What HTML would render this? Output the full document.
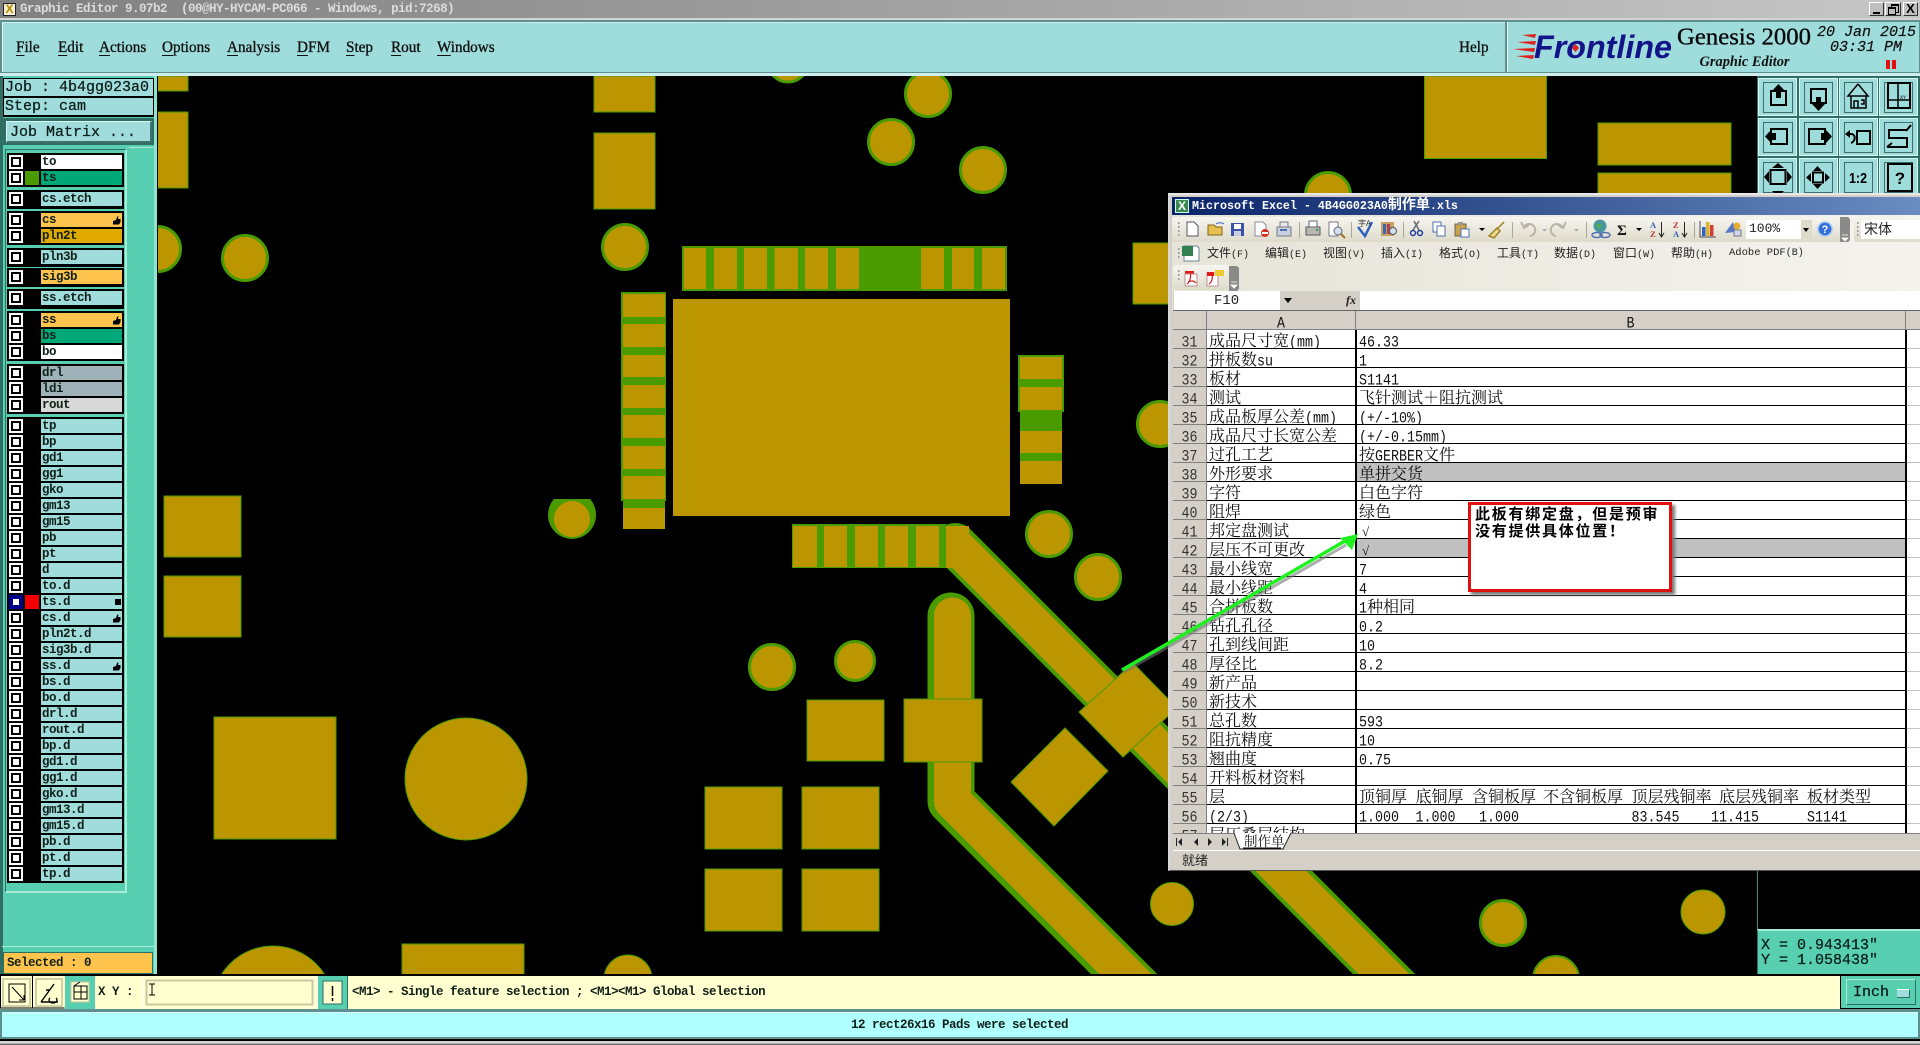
<!DOCTYPE html>
<html lang="zh"><head><meta charset="utf-8"><title>Graphic Editor</title>
<style>
html,body{margin:0;padding:0;background:#000}
body{position:relative;width:1920px;height:1045px;overflow:hidden;font-family:"Liberation Mono","Noto Serif CJK SC",monospace}
div,svg{position:absolute}
svg{left:0;top:0}
.m{position:absolute;top:37.5px;font:16px/20px "Liberation Serif",serif;-webkit-text-stroke:.35px #111;color:#111;white-space:nowrap;transform:scaleX(.95);transform-origin:left}
.m u{text-decoration-thickness:1px;text-underline-offset:3px}
.mono{font:bold 12.5px/14px "Liberation Mono",monospace;letter-spacing:-.5px;color:#102018;white-space:pre}
.big{font:15px/18px "Liberation Mono",monospace;-webkit-text-stroke:.25px #0c1c18;color:#0c1c18;white-space:pre}
.grp{left:7px;width:117px;background:#000}
.r{left:9px;width:113px;height:14px}
.c{left:0;top:0;width:10px;height:10px;border:2px solid #fff;background:#000}
.c:after{content:"";position:absolute;left:2px;top:2px;width:6px;height:6px;background:#fff}
.n{left:32px;top:0;width:81px;height:14px;background:#a0dcdc;text-indent:1px;font:bold 12.5px/15px "Liberation Mono",monospace;letter-spacing:-.5px;color:#102018;white-space:pre}
.sheet{left:1173px;top:311px;width:747px;height:522px;overflow:hidden;background:#fff;font:16px/19px "Noto Serif CJK SC",serif;color:#111}
.sheet>div{left:0;width:747px;height:19px}
.h,.a,.b{position:absolute;top:0;height:18px;white-space:nowrap;overflow:hidden}
.h{left:0;width:33px;background:#d4d0c8;border-right:1px solid #808080;border-bottom:1px solid #808080;text-align:center;color:#333}
.a{left:34px;width:147px;padding-left:2px;border-bottom:1px solid #000}
.b{left:184px;width:546px;padding-left:2px;border-bottom:1px solid #000}
.b span{position:absolute;top:0}
.sheet em{font:13.33px/19px "Liberation Mono",monospace;display:inline-block;transform:scaleY(1.18);font-style:normal}
.sheet i{font:italic 13px/19px "Liberation Serif",serif;display:inline-block;margin-left:3px}
.mi{position:absolute;top:245px;font:12px/16px "Noto Sans CJK SC",sans-serif;color:#222;white-space:nowrap}
.mi em{font:10px/16px "Liberation Mono",monospace;font-style:normal}
</style></head><body>

<!-- canvas -->
<svg width="1920" height="1045" viewBox="0 0 1920 1045">
<defs><clipPath id="cv"><rect x="157" y="76" width="1601" height="898"/></clipPath></defs>
<rect width="1920" height="1045" fill="#000"/>
<g clip-path="url(#cv)">
<g fill="#bb9600" stroke="#4a9b00" stroke-width="1">
<rect x="157" y="76" width="31" height="15"/><rect x="157" y="112" width="31" height="76"/>
<rect x="594" y="76" width="61" height="36"/><rect x="594" y="133" width="61" height="76"/>
<rect x="1424.5" y="76" width="122" height="82.5"/>
<rect x="1598" y="123" width="133" height="42"/><rect x="1598" y="173" width="133" height="60"/>
<rect x="1133" y="243" width="50" height="61"/>
<rect x="164" y="496" width="77" height="61"/><rect x="164" y="576" width="77" height="61"/>
<rect x="214" y="717" width="122" height="122"/>
<rect x="402" y="944" width="122" height="40"/>
<rect x="807" y="700" width="77" height="61"/>
<rect x="705" y="787" width="77" height="62"/><rect x="802" y="787" width="77" height="62"/>
<rect x="705" y="869" width="77" height="62"/><rect x="802" y="869" width="77" height="62"/>
<polygon points="1065,728 1108,771 1054,826 1011,782"/>
</g>
<g fill="#bb9600" stroke="#4a9b00" stroke-width="3">
<circle cx="158" cy="249" r="22.5"/><circle cx="245" cy="258" r="22.5"/><circle cx="625" cy="247" r="22.5"/>
<circle cx="788" cy="62" r="20"/><circle cx="928" cy="94" r="22.5"/><circle cx="891" cy="142" r="22.5"/>
<circle cx="983" cy="170" r="22.5"/><circle cx="1328" cy="195" r="22.5"/><circle cx="1049" cy="534" r="22.5"/>
<circle cx="1098" cy="577" r="22.5"/><circle cx="772" cy="667" r="22.5"/><circle cx="855" cy="661" r="19.5"/>
<circle cx="1160" cy="424" r="22.5"/><circle cx="1503" cy="923" r="22.5"/>
</g>
<path d="M554 499A24 24 0 1 0 590 499Z" fill="#4a9b00"/><circle cx="572" cy="519" r="18" fill="#bb9600"/>
<g fill="#bb9600" stroke="#4a9b00" stroke-width="1">
<circle cx="466" cy="779" r="61"/><circle cx="273" cy="1007" r="61"/><circle cx="1172" cy="904" r="21.5"/>
<circle cx="1703" cy="912" r="22"/></g>
<circle cx="628" cy="979" r="24" fill="#bb9600" stroke="#4a9b00"/>
<circle cx="1556" cy="979" r="23" fill="#bb9600" stroke="#4a9b00" stroke-width="2"/>
<!-- top strip -->
<rect x="682" y="246" width="325" height="45" fill="#4a9b00"/>
<g fill="#bb9600"><rect x="684" y="248" width="22" height="41"/><rect x="714" y="248" width="23" height="41"/><rect x="744" y="248" width="23" height="41"/><rect x="774.5" y="248" width="23.5" height="41"/><rect x="805" y="248" width="23" height="41"/><rect x="836" y="248" width="23" height="41"/><rect x="921" y="248" width="23" height="41"/><rect x="952" y="248" width="22" height="41"/><rect x="982" y="248" width="23" height="41"/>
<rect x="673" y="299" width="337" height="217"/></g>
<!-- left strip -->
<rect x="621" y="292" width="45" height="209" fill="#4a9b00"/><rect x="623" y="501" width="42" height="7" fill="#4a9b00"/>
<g fill="#bb9600"><rect x="623" y="294" width="42" height="23"/><rect x="623" y="324" width="42" height="23"/><rect x="623" y="355" width="42" height="22"/><rect x="623" y="385" width="42" height="23"/><rect x="623" y="415" width="42" height="23"/><rect x="623" y="446" width="42" height="23"/><rect x="623" y="476" width="42" height="23"/><rect x="623" y="508" width="42" height="21"/></g>
<!-- right strip -->
<rect x="1018" y="355" width="46" height="57" fill="#4a9b00"/><rect x="1020" y="412" width="42" height="19" fill="#4a9b00"/><rect x="1020" y="453" width="42" height="8" fill="#4a9b00"/>
<g fill="#bb9600"><rect x="1020" y="357" width="42" height="22"/><rect x="1020" y="387" width="42" height="23"/><rect x="1020" y="431" width="42" height="22"/><rect x="1020" y="461" width="42" height="23"/></g>
<!-- traces -->
<path d="M955 545L1440 1030" fill="none" stroke="#4a9b00" stroke-width="44" stroke-linecap="round"/>
<path d="M955 545L1440 1030" fill="none" stroke="#bb9600" stroke-width="36" stroke-linecap="round"/>
<path d="M951 616V801L1160 1010" fill="none" stroke="#4a9b00" stroke-width="47" stroke-linecap="round" stroke-linejoin="round"/>
<path d="M952.5 616V801L1160 1008.5" fill="none" stroke="#bb9600" stroke-width="37" stroke-linecap="round" stroke-linejoin="round"/>
<rect x="904" y="699" width="78" height="63" fill="#bb9600" stroke="#4a9b00"/>
<polygon points="1133,663 1079,712 1123,757 1177,708" fill="#bb9600" stroke="#4a9b00"/>
<!-- bottom strip -->
<rect x="792" y="524" width="154" height="44" fill="#4a9b00"/>
<rect x="946" y="526" width="23" height="42" fill="#bb9600"/>
<g fill="#bb9600"><rect x="793" y="526" width="24" height="41"/><rect x="824" y="526" width="23" height="41"/><rect x="855" y="526" width="23" height="41"/><rect x="885" y="526" width="23" height="41"/><rect x="916" y="526" width="23" height="41"/></g>
</g>
<rect x="1757" y="870" width="1" height="59" fill="#3f8a7c"/>
</svg>

<!-- title bar -->
<div style="left:0;top:0;width:1920px;height:18px;background:linear-gradient(90deg,#808080,#c6c6c6)"></div>
<div style="left:0;top:18px;width:1920px;height:2px;background:#d4d4d4"></div>
<div style="left:3px;top:3px;width:13px;height:13px;background:#f4eecb;border:1px solid #223;box-sizing:border-box;font:bold 12px/11px 'Liberation Sans',sans-serif;color:#b08a00;text-align:center">X</div>
<div class="mono" style="left:20px;top:2px;color:#dcdcdc">Graphic Editor 9.07b2  (00@HY-HYCAM-PC066 - Windows, pid:7268)</div>
<div style="left:1869px;top:2px;width:15px;height:14px;background:#bfbfbf;border:1px solid;border-color:#fff #333 #333 #fff;box-sizing:border-box"><div style="left:3px;top:9px;width:7px;height:2px;background:#000"></div></div>
<div style="left:1885px;top:2px;width:16px;height:14px;background:#bfbfbf;border:1px solid;border-color:#fff #333 #333 #fff;box-sizing:border-box"><div style="left:5px;top:1px;width:6px;height:6px;border:1px solid #000;border-top-width:2px"></div><div style="left:2px;top:4px;width:6px;height:5px;border:1px solid #000;border-top-width:2px;background:#bfbfbf"></div></div>
<div style="left:1903px;top:2px;width:15px;height:14px;background:#bfbfbf;border:1px solid;border-color:#fff #333 #333 #fff;box-sizing:border-box;font:bold 13px/12px 'Liberation Sans',sans-serif;text-align:center;color:#000">X</div>

<!-- menu bar -->
<div style="left:0;top:20px;width:1920px;height:56px;background:#5f8f8f"></div>
<div style="left:0;top:73px;width:1920px;height:3px;background:#cfeeee"></div>
<div style="left:2px;top:22px;width:1502px;height:49px;background:#9fdcdc;border-left:1px solid #e8ffff;border-top:1px solid #c8f0f0"></div>
<div class="m" style="left:15.5px"><u>F</u>ile</div>
<div class="m" style="left:57.5px"><u>E</u>dit</div>
<div class="m" style="left:99px"><u>A</u>ctions</div>
<div class="m" style="left:162.4px"><u>O</u>ptions</div>
<div class="m" style="left:227px"><u>A</u>nalysis</div>
<div class="m" style="left:296.7px"><u>D</u>FM</div>
<div class="m" style="left:346px"><u>S</u>tep</div>
<div class="m" style="left:391.4px"><u>R</u>out</div>
<div class="m" style="left:437px"><u>W</u>indows</div>
<div class="m" style="left:1459px">Help</div>
<div style="left:1507px;top:22px;width:411px;height:50px;background:#9fdcdc;border-left:1px solid #e8ffff"></div>
<svg width="1920" height="80" viewBox="0 0 1920 80" style="height:80px">
<g fill="#e02020"><polygon points="1522,35 1536,34 1535,38"/><polygon points="1517,42 1536,41 1535,45"/><polygon points="1513,49 1535,48 1534,52"/><polygon points="1516,56 1534,55 1533,59"/></g>
<text x="1534" y="58" font-family="Liberation Sans" font-weight="bold" font-style="italic" font-size="32" fill="#14148a" textLength="138" lengthAdjust="spacingAndGlyphs">Frontline</text>
<polygon points="1575.5,44 1579,48 1575.5,52 1572,48" fill="#e02020"/>
<text x="1677" y="44.5" font-family="Liberation Serif" font-size="24.5" fill="#0a0a0a" stroke="#0a0a0a" stroke-width=".35" textLength="134" lengthAdjust="spacingAndGlyphs">Genesis 2000</text>
<text x="1699.5" y="66" font-family="Liberation Serif" font-style="italic" font-weight="bold" font-size="14.5" fill="#111" textLength="90" lengthAdjust="spacingAndGlyphs">Graphic Editor</text>
<text x="1817" y="36" font-family="Liberation Mono" font-style="italic" font-size="15" fill="#111" stroke="#111" stroke-width=".2">20 Jan 2015</text>
<text x="1830" y="51" font-family="Liberation Mono" font-style="italic" font-size="15" fill="#111" stroke="#111" stroke-width=".2">03:31 PM</text>
<rect x="1886" y="60" width="4" height="9" fill="#e01010"/><rect x="1892" y="60" width="4" height="9" fill="#e01010"/>
</svg>

<!-- left panel -->
<div style="left:0;top:76px;width:155px;height:900px;background:#58cfb0"></div>
<div style="left:0;top:76px;width:3px;height:900px;background:#2f6e62"></div>
<div style="left:154px;top:76px;width:3px;height:900px;background:#8fe4cf;border-right:1px solid #000"></div>
<div style="left:3px;top:78px;width:151px;height:39px;background:#000"></div>
<div class="big" style="left:4px;top:79px;width:149px;height:17px;background:#a0dcdc;line-height:18px;text-indent:1px">Job : 4b4gg023a0</div>
<div class="big" style="left:4px;top:98px;width:149px;height:17px;background:#a0dcdc;line-height:18px;text-indent:1px">Step: cam</div>
<div style="left:3px;top:118px;width:151px;height:27px;background:#2f6e62"></div>
<div class="big" style="left:6px;top:121px;width:143px;height:19px;background:#a0dcdc;border:1px solid #d8f8f8;border-right:2px solid #3f6f6f;border-bottom:2px solid #3f6f6f;line-height:21px;text-indent:3px">Job Matrix ...</div>
<div style="left:5px;top:149px;width:122px;height:744px;background:#58cfb0;border:1px solid #2f6e62;border-right:2px solid #a8ecd8;border-bottom:2px solid #a8ecd8;box-sizing:border-box"></div>
<div style="left:129px;top:147px;width:25px;height:1px;background:#a8ecd8"></div>

<div class="grp" style="top:153px;height:34px"></div><div class="grp" style="top:190px;height:19px"></div><div class="grp" style="top:211px;height:34px"></div><div class="grp" style="top:248px;height:19px"></div><div class="grp" style="top:268px;height:19px"></div><div class="grp" style="top:289px;height:20px"></div><div class="grp" style="top:311px;height:50px"></div><div class="grp" style="top:364px;height:50px"></div><div class="grp" style="top:417px;height:466px"></div>

<div class="r" style="top:155px"><div class="c"></div><div class="n" style="background:#fff">to</div></div>
<div class="r" style="top:171px"><div class="c"></div><div style="left:16px;top:0;width:14px;height:14px;background:#4a9b00"></div><div class="n" style="background:#00a878">ts</div></div>
<div class="r" style="top:192px"><div class="c"></div><div class="n">cs.etch</div></div>
<div class="r" style="top:213px"><div class="c"></div><div class="n" style="background:#ffc44d">cs<svg width="9" height="9" viewBox="0 0 9 9" style="left:71px;top:3px"><path d="M1 8.5V5L4 4 5 1 6.5 0 6 3H8.5V6L7 8.5Z"/></svg></div></div>
<div class="r" style="top:229px"><div class="c"></div><div class="n" style="background:#e0aa00">pln2t</div></div>
<div class="r" style="top:250px"><div class="c"></div><div class="n">pln3b</div></div>
<div class="r" style="top:270px"><div class="c"></div><div class="n" style="background:#ffc44d">sig3b</div></div>
<div class="r" style="top:291px"><div class="c"></div><div class="n">ss.etch</div></div>
<div class="r" style="top:313px"><div class="c"></div><div class="n" style="background:#ffc44d">ss<svg width="9" height="9" viewBox="0 0 9 9" style="left:71px;top:3px"><path d="M1 8.5V5L4 4 5 1 6.5 0 6 3H8.5V6L7 8.5Z"/></svg></div></div>
<div class="r" style="top:329px"><div class="c"></div><div class="n" style="background:#00a878">bs</div></div>
<div class="r" style="top:345px"><div class="c"></div><div class="n" style="background:#fff">bo</div></div>
<div class="r" style="top:366px"><div class="c"></div><div class="n" style="background:#9fb2ba">drl</div></div>
<div class="r" style="top:382px"><div class="c"></div><div class="n" style="background:#9fb2ba">ldi</div></div>
<div class="r" style="top:398px"><div class="c"></div><div class="n" style="background:#d8d8d8">rout</div></div>
<div class="r" style="top:419px"><div class="c"></div><div class="n">tp</div></div>
<div class="r" style="top:435px"><div class="c"></div><div class="n">bp</div></div>
<div class="r" style="top:451px"><div class="c"></div><div class="n">gd1</div></div>
<div class="r" style="top:467px"><div class="c"></div><div class="n">gg1</div></div>
<div class="r" style="top:483px"><div class="c"></div><div class="n">gko</div></div>
<div class="r" style="top:499px"><div class="c"></div><div class="n">gm13</div></div>
<div class="r" style="top:515px"><div class="c"></div><div class="n">gm15</div></div>
<div class="r" style="top:531px"><div class="c"></div><div class="n">pb</div></div>
<div class="r" style="top:547px"><div class="c"></div><div class="n">pt</div></div>
<div class="r" style="top:563px"><div class="c"></div><div class="n">d</div></div>
<div class="r" style="top:579px"><div class="c"></div><div class="n">to.d</div></div>
<div class="r" style="top:595px"><div class="c" style="border-color:#00008c;background:#00008c"></div><div style="left:16px;top:0;width:14px;height:14px;background:#f00000"></div><div class="n">ts.d<div style="left:74px;top:4px;width:4px;height:4px;border:1px solid #000;background:#000"></div></div></div>
<div class="r" style="top:611px"><div class="c"></div><div class="n">cs.d<svg width="9" height="9" viewBox="0 0 9 9" style="left:71px;top:3px"><path d="M1 8.5V5L4 4 5 1 6.5 0 6 3H8.5V6L7 8.5Z"/></svg></div></div>
<div class="r" style="top:627px"><div class="c"></div><div class="n">pln2t.d</div></div>
<div class="r" style="top:643px"><div class="c"></div><div class="n">sig3b.d</div></div>
<div class="r" style="top:659px"><div class="c"></div><div class="n">ss.d<svg width="9" height="9" viewBox="0 0 9 9" style="left:71px;top:3px"><path d="M1 8.5V5L4 4 5 1 6.5 0 6 3H8.5V6L7 8.5Z"/></svg></div></div>
<div class="r" style="top:675px"><div class="c"></div><div class="n">bs.d</div></div>
<div class="r" style="top:691px"><div class="c"></div><div class="n">bo.d</div></div>
<div class="r" style="top:707px"><div class="c"></div><div class="n">drl.d</div></div>
<div class="r" style="top:723px"><div class="c"></div><div class="n">rout.d</div></div>
<div class="r" style="top:739px"><div class="c"></div><div class="n">bp.d</div></div>
<div class="r" style="top:755px"><div class="c"></div><div class="n">gd1.d</div></div>
<div class="r" style="top:771px"><div class="c"></div><div class="n">gg1.d</div></div>
<div class="r" style="top:787px"><div class="c"></div><div class="n">gko.d</div></div>
<div class="r" style="top:803px"><div class="c"></div><div class="n">gm13.d</div></div>
<div class="r" style="top:819px"><div class="c"></div><div class="n">gm15.d</div></div>
<div class="r" style="top:835px"><div class="c"></div><div class="n">pb.d</div></div>
<div class="r" style="top:851px"><div class="c"></div><div class="n">pt.d</div></div>
<div class="r" style="top:867px"><div class="c"></div><div class="n">tp.d</div></div>

<div style="left:2px;top:946px;width:152px;height:1px;background:#a8ecd8"></div>
<div style="left:3px;top:952px;width:150px;height:22px;background:#2f6e62"></div>
<div class="mono" style="left:4px;top:953px;width:148px;height:20px;background:#ffc44d;line-height:20px;text-indent:3px">Selected : 0</div>

<!-- right toolbar -->
<div style="left:1757px;top:76px;width:163px;height:125px;background:#2f6e62"></div>
<svg width="1920" height="200" viewBox="0 0 1920 200" style="height:200px">
<g fill="#9fdcdc" stroke="#d8f8f8">
<rect x="1758.5" y="78.5" width="38" height="37"/><rect x="1799.5" y="78.5" width="38" height="37"/><rect x="1839.5" y="78.5" width="38" height="37"/><rect x="1879.5" y="78.5" width="38" height="37"/>
<rect x="1758.5" y="118.5" width="38" height="37"/><rect x="1799.5" y="118.5" width="38" height="37"/><rect x="1839.5" y="118.5" width="38" height="37"/><rect x="1879.5" y="118.5" width="38" height="37"/>
<rect x="1758.5" y="158.5" width="38" height="37"/><rect x="1799.5" y="158.5" width="38" height="37"/><rect x="1839.5" y="158.5" width="38" height="37"/><rect x="1879.5" y="158.5" width="38" height="37"/>
</g>
<g fill="none" stroke="#3c6e6e">
<rect x="1763.5" y="82.5" width="29" height="30"/><rect x="1804.5" y="82.5" width="28" height="30"/><rect x="1844.5" y="82.5" width="28" height="30"/><rect x="1884.5" y="82.5" width="28" height="30"/>
<rect x="1763.5" y="122.5" width="29" height="30"/><rect x="1804.5" y="122.5" width="28" height="30"/><rect x="1844.5" y="122.5" width="28" height="30"/><rect x="1884.5" y="122.5" width="28" height="30"/>
<rect x="1763.5" y="162.5" width="29" height="30"/><rect x="1804.5" y="162.5" width="28" height="30"/><rect x="1844.5" y="162.5" width="28" height="30"/><rect x="1884.5" y="162.5" width="28" height="30"/>
</g>
<g fill="none" stroke="#000" stroke-width="2">
<rect x="1771" y="91" width="15" height="14"/><rect x="1811" y="89" width="15" height="14"/>
<path d="M1858 84L1848 96H1868L1858 84M1851 96V108H1866V96M1854 108V101H1858V108M1861 100H1864V104H1861" stroke-width="1.5"/>
<rect x="1888" y="83" width="22" height="25" stroke-width="2"/><path d="M1888 100H1910M1898 83V108" stroke-width="1.5"/>
<rect x="1771" y="129" width="16" height="15"/><rect x="1809" y="129" width="16" height="15"/>
<rect x="1857" y="131" width="13" height="13"/>
<path d="M1851 143C1856 141 1856 134 1851 134H1847" stroke-width="2"/>
<path d="M1907 130H1889V138H1907V147H1887M1911 125L1906 131M1887 147L1892 143" stroke-width="2"/>
<rect x="1770.5" y="170" width="15" height="14"/>
<rect x="1813" y="172.5" width="10" height="10"/>
<rect x="1888" y="164" width="24" height="27"/>
</g>
<g fill="#000">
<polygon points="1778.5,84 1772,91 1776,91 1776,98 1781,98 1781,91 1785,91"/>
<polygon points="1818.5,111 1812,104 1816,104 1816,97 1821,97 1821,104 1825,104"/>
<polygon points="1765,136.5 1771,130 1771,133 1776,133 1776,140 1771,140 1771,143"/>
<polygon points="1832,136.5 1826,130 1826,133 1821,133 1821,140 1826,140 1826,143"/>
<polygon points="1845,134 1850,130 1850,138"/>
<polygon points="1778,163 1772,168 1784,168"/><polygon points="1764,177 1769,171 1769,183"/><polygon points="1792,177 1787,171 1787,183"/><polygon points="1778,197 1772,191 1784,191"/>
<polygon points="1817.5,166 1813,171 1822,171"/><polygon points="1817.5,189 1813,184 1822,184"/><polygon points="1806,177.5 1811,173 1811,182"/><polygon points="1830,177.5 1825,173 1825,182"/>
</g>
<text x="1858" y="183" text-anchor="middle" font-family="Liberation Sans" font-weight="bold" font-size="15" fill="#000" textLength="18" lengthAdjust="spacingAndGlyphs">1:2</text>
<text x="1900" y="184" text-anchor="middle" font-family="Liberation Sans" font-weight="bold" font-size="17" fill="#000">?</text>
<text x="1900" y="99" font-family="Liberation Mono" font-size="5" fill="#000">XY</text>
</svg>

<!-- coords panel -->
<div style="left:1757px;top:929px;width:163px;height:45px;background:#58cfb0;border-top:2px solid #a8ecd8;border-left:1px solid #2f6e62;box-sizing:border-box"></div>
<div class="big" style="left:1761px;top:938px;line-height:15px;color:#072018">X = 0.943413"
Y = 1.058438"</div>

<!-- bottom command bar -->
<div style="left:0;top:974px;width:1920px;height:2px;background:#000"></div>
<div style="left:0;top:976px;width:1840px;height:33px;background:#ffffd0;border-bottom:1px solid #000"></div>
<svg width="1920" height="1045" viewBox="0 0 1920 1045">
<g fill="#ffffd0" stroke="#cfcfa8" stroke-width="2"><rect x="3" y="979" width="27" height="27"/><rect x="36" y="979" width="26" height="27"/></g>
<path d="M0.5 976V1008H32.5M32.5 976V1008H64.5" fill="none" stroke="#000"/>
<g fill="none" stroke="#000"><rect x="9" y="984" width="16" height="18"/><path d="M12 987L24 1000M24 1000L24 995M24 1000L19 1000"/><path d="M41 1002H58M54 984L41 1002M46 990H50M50 998a4 3 0 1 0 6 0" stroke-width="1.4"/></g>
<rect x="65" y="976" width="30" height="33" fill="#58cfb0"/><rect x="71" y="982" width="18" height="20" fill="#ffffd0" stroke="#c8c8a0"/>
<path d="M74 986H87V999H74ZM74 992H87M81 986V999M74 986L80 982" fill="none" stroke="#000"/>
<rect x="143" y="976" width="173" height="32" fill="#ffffd0"/><rect x="146.5" y="980.5" width="166" height="24" fill="none" stroke="#c8c8a0" stroke-width="2"/>
<path d="M143 976V1008M316 976V1008" stroke="#fff"/>
<path d="M149 984H155M152 984V995M149 995H155" stroke="#000" fill="none"/>
<rect x="318" y="976" width="29" height="33" fill="#58cfb0"/><rect x="323" y="981" width="19" height="23" fill="#ffffd0" stroke="#2f6e62"/>
<path d="M332.5 986V996M332.5 998V1001" stroke="#000" stroke-width="1.5"/>
<rect x="347" y="976" width="1" height="33" fill="#2f6e62"/>
</svg>
<div class="mono" style="left:98px;top:985px">X Y :</div>
<div class="mono" style="left:352px;top:985px">&lt;M1&gt; - Single feature selection ; &lt;M1&gt;&lt;M1&gt; Global selection</div>
<div style="left:1840px;top:976px;width:80px;height:33px;background:#000"></div>
<div style="left:1841px;top:976px;width:79px;height:32px;background:#58cfb0"></div>
<div class="big" style="left:1846px;top:979px;width:70px;height:26px;background:#58cfb0;border:1px solid #a8ecd8;border-right-color:#2f6e62;border-bottom-color:#2f6e62;box-sizing:border-box;line-height:25px;text-indent:6px">Inch</div>
<div style="left:1897px;top:989px;width:12px;height:7px;background:#a0dcdc;border-bottom:1px solid #2f6e62;border-right:1px solid #2f6e62;border-top:1px solid #fff"></div>

<!-- status bar -->
<div style="left:0;top:1009px;width:1920px;height:36px;background:#5f9090"></div>
<div style="left:2px;top:1012px;width:1916px;height:27px;background:#b0ffff;border-top:1px solid #d8ffff;border-bottom:2px solid #5f9090;box-sizing:border-box"></div>
<div class="mono" style="left:851px;top:1018px">12 rect26x16 Pads were selected</div>
<div style="left:0;top:1039px;width:1920px;height:2px;background:#000"></div>
<div style="left:0;top:1041px;width:1920px;height:4px;background:linear-gradient(#d4d4d4,#d4d4d4 50%,#444)"></div>

<!-- excel window -->
<div style="left:1168px;top:193px;width:752px;height:678px;background:#d4d0c8;border-top:2px solid #e8e8e8;border-left:2px solid #d8d8d8;border-bottom:1px solid #555;box-sizing:border-box"></div>
<div style="left:1172px;top:197px;width:748px;height:18px;background:linear-gradient(90deg,#0a246a,#6a8cc0)"></div>
<div style="left:1175px;top:199px;width:14px;height:14px;background:#3c8a50;border:1px solid #cfe;box-sizing:border-box;font:bold 12px/12px 'Liberation Sans',sans-serif;color:#fff;text-align:center">X</div>
<div style="left:1192px;top:197px;font:bold 11.67px/18px 'Liberation Mono','Noto Sans CJK SC',monospace;color:#fff;white-space:pre">Microsoft Excel - 4B4GG023A0<span style="font-size:14px">制作单</span>.xls</div>
<div style="left:1172px;top:215px;width:748px;height:96px;background:linear-gradient(90deg,#e6e4d8,#f4f3ee)"></div>
<div style="left:1172px;top:217px;width:678px;height:25px;background:linear-gradient(#f6f5ef,#dedbca);border-radius:3px"></div>
<div style="left:1840px;top:217px;width:10px;height:25px;background:#8a8a88;border-radius:0 3px 3px 0"></div>
<div style="left:1854px;top:217px;width:66px;height:25px;background:linear-gradient(#f6f5ef,#dedbca);border-radius:3px 0 0 3px"></div>
<div style="left:1746px;top:220px;width:66px;height:19px;background:#fff;font:13px/17px 'Liberation Mono',monospace;text-indent:3px;color:#222">100%<div style="left:55px;top:0;width:11px;height:19px;background:#dedbca"><div style="left:2px;top:8px;border:3px solid transparent;border-top:4px solid #000"></div></div></div>
<div style="left:1861px;top:220px;width:59px;height:19px;background:#fff;font:14px/18px 'Noto Sans CJK SC',sans-serif;text-indent:3px;color:#222">宋体</div>
<div class="mi" style="left:1207px">文件<em>(F)</em></div>
<div class="mi" style="left:1265px">编辑<em>(E)</em></div>
<div class="mi" style="left:1323px">视图<em>(V)</em></div>
<div class="mi" style="left:1381px">插入<em>(I)</em></div>
<div class="mi" style="left:1439px">格式<em>(O)</em></div>
<div class="mi" style="left:1497px">工具<em>(T)</em></div>
<div class="mi" style="left:1554px">数据<em>(D)</em></div>
<div class="mi" style="left:1613px">窗口<em>(W)</em></div>
<div class="mi" style="left:1671px">帮助<em>(H)</em></div>
<div class="mi" style="left:1729px;font:10.5px/16px 'Liberation Mono',monospace">Adobe PDF<em>(B)</em></div>
<div style="left:1173px;top:265px;width:58px;height:25px;background:linear-gradient(#f6f5ef,#dedbca);border-radius:3px"></div>
<div style="left:1229px;top:266px;width:10px;height:25px;background:#8a8a88;border-radius:0 3px 3px 0"></div>

<svg width="1920" height="320" viewBox="0 0 1920 320" style="height:320px">
<g stroke="#aca899"><path d="M1299.5 222V238M1351.5 222V238M1403.5 222V238M1512.5 222V238M1586.5 222V238M1694.5 222V238"/></g>
<g fill="#999"><rect x="1178" y="222" width="1.5" height="2"/><rect x="1178" y="226" width="1.5" height="2"/><rect x="1178" y="230" width="1.5" height="2"/><rect x="1178" y="234" width="1.5" height="2"/><rect x="1178" y="248" width="1.5" height="2"/><rect x="1178" y="252" width="1.5" height="2"/><rect x="1178" y="256" width="1.5" height="2"/><rect x="1178" y="270" width="1.5" height="2"/><rect x="1178" y="274" width="1.5" height="2"/><rect x="1178" y="278" width="1.5" height="2"/><rect x="1857" y="222" width="1.5" height="2"/><rect x="1857" y="226" width="1.5" height="2"/><rect x="1857" y="230" width="1.5" height="2"/><rect x="1857" y="234" width="1.5" height="2"/></g>
<path d="M1187 222H1194L1198 226V236H1187Z" fill="#fff" stroke="#556"/>
<path d="M1208 225H1214L1216 227H1222V235H1208Z" fill="#e8c050" stroke="#806020"/><path d="M1216 224a5 3 0 0 1 8 0" fill="none" stroke="#3060c0"/>
<rect x="1231" y="223" width="13" height="13" fill="#3c52a8"/><rect x="1234" y="224" width="7" height="5" fill="#fff"/><rect x="1234" y="231" width="7" height="5" fill="#c8d0e0"/>
<path d="M1255 222H1263L1266 225V236H1255Z" fill="#fff" stroke="#889"/><circle cx="1265" cy="233" r="4" fill="#d83020"/><rect x="1262" y="232" width="6" height="2" fill="#fff"/>
<rect x="1277" y="227" width="14" height="9" fill="#c8d0e0" stroke="#778"/><path d="M1280 222H1288V227H1280Z" fill="#e8e8e8" stroke="#778"/><rect x="1280" y="229" width="7" height="2" fill="#5070b0"/>
<rect x="1306" y="227" width="14" height="8" fill="#b8b8b0" stroke="#556"/><rect x="1309" y="221" width="8" height="6" fill="#fff" stroke="#667"/><rect x="1316" y="229" width="2" height="2" fill="#20a040"/>
<path d="M1329 222H1338V236H1329Z" fill="#fff" stroke="#778"/><circle cx="1338" cy="231" r="4" fill="#cfe0f0" stroke="#667"/><path d="M1341 234L1345 238" stroke="#a07020" stroke-width="2"/>
<path d="M1358 227L1365 236 1372 222" fill="none" stroke="#3060c0" stroke-width="2.5"/><text x="1358" y="226" font-family="Noto Sans CJK SC" font-size="8" fill="#333">字A</text>
<rect x="1381" y="222" width="13" height="14" fill="#c8a060"/><rect x="1383" y="224" width="3" height="10" fill="#3868b0"/><rect x="1387" y="224" width="3" height="10" fill="#b04060"/><circle cx="1393" cy="231" r="3.5" fill="#cfe0f0" stroke="#555"/>
<path d="M1414 221L1419 230M1419 221L1413 230" stroke="#667" stroke-width="1.5"/><circle cx="1413" cy="233" r="2.5" fill="none" stroke="#2040a0" stroke-width="1.5"/><circle cx="1420" cy="233" r="2.5" fill="none" stroke="#2040a0" stroke-width="1.5"/>
<rect x="1433" y="222" width="8" height="10" fill="#fff" stroke="#5070b0"/><rect x="1437" y="226" width="8" height="10" fill="#fff" stroke="#5070b0"/>
<rect x="1455" y="224" width="11" height="12" fill="#c8a050" stroke="#665"/><rect x="1458" y="222" width="5" height="3" fill="#999"/><rect x="1461" y="229" width="8" height="8" fill="#fff" stroke="#5070b0"/>
<path d="M1479 228h6l-3 3Z" fill="#000"/>
<path d="M1489 236L1497 228 1500 231 1494 238ZM1498 228L1504 222" fill="#e8d890" stroke="#a08020" stroke-width="1.5"/>
<path d="M1530 236a6 6 0 1 0-6-9M1521 222L1524 228 1529 225" fill="none" stroke="#b8b4a8" stroke-width="2"/><path d="M1542 229h5l-2.5 2.5Z M1574 229h5l-2.5 2.5Z" fill="#aaa"/>
<path d="M1556 236a6 6 0 1 1 6-9M1566 222L1563 228 1558 225" fill="none" stroke="#b8b4a8" stroke-width="2"/>
<circle cx="1600" cy="226" r="6.5" fill="#4898a0"/><path d="M1596 224h5v4h-3Z" fill="#50a850"/><ellipse cx="1597" cy="235" rx="5" ry="2.5" fill="none" stroke="#5070b0" stroke-width="1.5"/><ellipse cx="1605" cy="235" rx="5" ry="2.5" fill="none" stroke="#5070b0" stroke-width="1.5"/>
<text x="1617" y="235" font-family="Liberation Serif" font-weight="bold" font-size="15" fill="#111">Σ</text>
<path d="M1636 228h6l-3 3Z" fill="#000"/>
<text x="1650" y="228" font-family="Liberation Serif" font-weight="bold" font-size="8.5" fill="#3060c0">A</text><text x="1650" y="237" font-family="Liberation Serif" font-weight="bold" font-size="8.5" fill="#c03030">Z</text><path d="M1661.5 222V236M1659 233L1661.5 237 1664 233" fill="none" stroke="#222"/>
<text x="1673" y="228" font-family="Liberation Serif" font-weight="bold" font-size="8.5" fill="#c03030">Z</text><text x="1673" y="237" font-family="Liberation Serif" font-weight="bold" font-size="8.5" fill="#3060c0">A</text><path d="M1684.5 222V236M1682 233L1684.5 237 1687 233" fill="none" stroke="#222"/>
<rect x="1702" y="227" width="3.5" height="9" fill="#3060c0"/><rect x="1706" y="222" width="3.5" height="14" fill="#e0b030"/><rect x="1710" y="225" width="3.5" height="11" fill="#d04030"/><path d="M1700 221V237H1716" fill="none" stroke="#445"/>
<path d="M1725 233L1733 222 1736 232Z" fill="#5878c8"/><circle cx="1737" cy="226" r="3.5" fill="#e8b030"/><rect x="1734" y="230" width="7" height="6" fill="#cfd8e8" stroke="#778"/>
<circle cx="1825" cy="229" r="7" fill="#3070d8" stroke="#a8c8f0" stroke-width="1.5"/><text x="1825" y="233" text-anchor="middle" font-family="Liberation Sans" font-weight="bold" font-size="11" fill="#fff">?</text>
<path d="M1842 235h6M1842 238h6l-3 3Z" fill="#fff" stroke="#fff" stroke-width=".8"/>
<path d="M1231 282h6M1231 285h6l-3 3Z" fill="#fff" stroke="#fff" stroke-width=".8"/>
<path d="M1184 246H1197L1199 248V261H1184Z" fill="#fff" stroke="#7080a0"/><rect x="1182" y="246" width="11" height="10" fill="#308050"/>
<rect x="1185" y="271" width="9" height="3" fill="#e01818"/><path d="M1185 274H1197V286H1185Z" fill="#fff" stroke="#b89090"/><path d="M1187 284C1190 282 1191 277 1190.5 274M1188 282C1192 280 1194 281 1196 283" fill="none" stroke="#d01818" stroke-width="1.2"/>
<path d="M1207 274H1218V286H1207Z" fill="#fff" stroke="#b89090"/><rect x="1207" y="272" width="7" height="4" fill="#e01818"/><rect x="1215" y="270" width="9" height="6" fill="#f0c830"/><path d="M1209 284C1212 282 1213 278 1212 274" fill="none" stroke="#d01818" stroke-width="1.2"/>
</svg>

<!-- name box -->
<div style="left:1173px;top:291px;width:747px;height:19px;background:#d4d0c8"></div>
<div style="left:1174px;top:291px;width:106px;height:19px;background:#fff;font:14px/20px 'Liberation Mono',monospace;color:#222;text-indent:40px">F10</div>
<div style="left:1284px;top:298px;border:4px solid transparent;border-top:5px solid #000"></div>
<div style="left:1346px;top:290px;font:italic bold 12px/20px 'Liberation Serif',serif;color:#222">fx</div>
<div style="left:1360px;top:291px;width:560px;height:19px;background:#fff"></div>
<div style="left:1173px;top:310px;width:747px;height:1px;background:#666"></div>

<!-- sheet -->
<div class="sheet">
<div style="top:0;left:0;height:19px;background:#d4d0c8;border-bottom:0;box-sizing:border-box"></div>
<div style="left:0;top:18px;width:747px;height:1px;background:#808080"></div>
<div style="left:33px;top:0;width:1px;height:19px;background:#808080"></div>
<div style="left:182px;top:0;width:1px;height:19px;background:#808080"></div>
<div style="left:732px;top:0;width:1px;height:19px;background:#808080"></div>
<div style="left:34px;top:0;width:148px;height:18px;text-align:center"><em>A</em></div>
<div style="left:183px;top:0;width:549px;height:18px;text-align:center"><em>B</em></div>
<div style="left:734px;top:19px;width:13px;height:503px;background:repeating-linear-gradient(#fff 0 18px,#c4c4c4 18px 19px)"></div>

<div style="top:19px"><div class="h"><em>31</em></div><div class="a">成品尺寸宽<em>(mm)</em></div><div class="b"><em>46.33</em></div></div>
<div style="top:38px"><div class="h"><em>32</em></div><div class="a">拼板数<em>su</em></div><div class="b"><em>1</em></div></div>
<div style="top:57px"><div class="h"><em>33</em></div><div class="a">板材</div><div class="b"><em>S1141</em></div></div>
<div style="top:76px"><div class="h"><em>34</em></div><div class="a">测试</div><div class="b">飞针测试＋阻抗测试</div></div>
<div style="top:95px"><div class="h"><em>35</em></div><div class="a">成品板厚公差<em>(mm)</em></div><div class="b"><em>(+/-10%)</em></div></div>
<div style="top:114px"><div class="h"><em>36</em></div><div class="a">成品尺寸长宽公差</div><div class="b"><em>(+/-0.15mm)</em></div></div>
<div style="top:133px"><div class="h"><em>37</em></div><div class="a">过孔工艺</div><div class="b">按<em>GERBER</em>文件</div></div>
<div style="top:152px"><div class="h"><em>38</em></div><div class="a">外形要求</div><div class="b" style="background:#c0c0c0">单拼交货</div></div>
<div style="top:171px"><div class="h"><em>39</em></div><div class="a">字符</div><div class="b">白色字符</div></div>
<div style="top:190px"><div class="h"><em>40</em></div><div class="a">阻焊</div><div class="b">绿色</div></div>
<div style="top:209px"><div class="h"><em>41</em></div><div class="a">邦定盘测试</div><div class="b"><i>√</i></div></div>
<div style="top:228px"><div class="h"><em>42</em></div><div class="a">层压不可更改</div><div class="b" style="background:#c0c0c0"><i>√</i></div></div>
<div style="top:247px"><div class="h"><em>43</em></div><div class="a">最小线宽</div><div class="b"><em>7</em></div></div>
<div style="top:266px"><div class="h"><em>44</em></div><div class="a">最小线距</div><div class="b"><em>4</em></div></div>
<div style="top:285px"><div class="h"><em>45</em></div><div class="a">合拼板数</div><div class="b"><em>1</em>种相同</div></div>
<div style="top:304px"><div class="h"><em>46</em></div><div class="a">钻孔孔径</div><div class="b"><em>0.2</em></div></div>
<div style="top:323px"><div class="h"><em>47</em></div><div class="a">孔到线间距</div><div class="b"><em>10</em></div></div>
<div style="top:342px"><div class="h"><em>48</em></div><div class="a">厚径比</div><div class="b"><em>8.2</em></div></div>
<div style="top:361px"><div class="h"><em>49</em></div><div class="a">新产品</div><div class="b"></div></div>
<div style="top:380px"><div class="h"><em>50</em></div><div class="a">新技术</div><div class="b"></div></div>
<div style="top:399px"><div class="h"><em>51</em></div><div class="a">总孔数</div><div class="b"><em>593</em></div></div>
<div style="top:418px"><div class="h"><em>52</em></div><div class="a">阻抗精度</div><div class="b"><em>10</em></div></div>
<div style="top:437px"><div class="h"><em>53</em></div><div class="a">翘曲度</div><div class="b"><em>0.75</em></div></div>
<div style="top:456px"><div class="h"><em>54</em></div><div class="a">开料板材资料</div><div class="b"></div></div>
<div style="top:475px"><div class="h"><em>55</em></div><div class="a">层</div><div class="b"><span style="left:2px">顶铜厚</span><span style="left:58.5px">底铜厚</span><span style="left:115px">含铜板厚</span><span style="left:186px">不含铜板厚</span><span style="left:274.5px">顶层残铜率</span><span style="left:362px">底层残铜率</span><span style="left:450px">板材类型</span></div></div>
<div style="top:494px"><div class="h"><em>56</em></div><div class="a"><em>(2/3)</em></div><div class="b"><span style="left:2px"><em>1.000</em></span><span style="left:58.5px"><em>1.000</em></span><span style="left:122px"><em>1.000</em></span><span style="left:274.5px"><em>83.545</em></span><span style="left:354px"><em>11.415</em></span><span style="left:450px"><em>S1141</em></span></div></div>
<div style="top:513px"><div class="h"><em>57</em></div><div class="a">层压叠层结构</div><div class="b"></div></div>
<div style="left:182px;top:19px;width:2px;height:503px;background:#000"></div>
<div style="left:732px;top:19px;width:2px;height:503px;background:#000"></div>
</div>

<!-- tabs & status -->
<div style="left:1173px;top:833px;width:747px;height:17px;background:#d4d0c8;border-top:1px solid #808080;box-sizing:border-box"></div>
<svg width="1920" height="870" viewBox="0 0 1920 870" style="height:870px">
<g fill="#222"><rect x="1176" y="838" width="1" height="8"/><path d="M1182 838L1178 842 1182 846ZM1198 838L1194 842 1198 846ZM1208 838L1212 842 1208 846ZM1222 838L1226 842 1222 846Z"/><rect x="1227" y="838" width="1" height="8"/></g>
<path d="M1234 833L1240 849H1283L1291 833" fill="#fff" stroke="#222"/>
<path d="M1243 848H1281" stroke="#000"/>
</svg>
<div style="left:1244px;top:833px;font:13.5px/15px 'Noto Serif CJK SC',serif;color:#111;white-space:nowrap">制作单</div>
<div style="left:1173px;top:850px;width:747px;height:1px;background:#fff"></div>
<div style="left:1182px;top:851px;font:13px/18px 'Noto Sans CJK SC',sans-serif;color:#222">就绪</div>

<!-- callout -->
<div style="left:1468px;top:502px;width:204px;height:90px;box-sizing:border-box;background:#fff;border:3px solid #e01010;box-shadow:3px 3px 3px #777"></div>
<div style="left:1475px;top:505px;font:bold 15px/17px 'Noto Sans CJK SC',sans-serif;color:#000;letter-spacing:1.75px;white-space:nowrap">此板有绑定盘，但是预审<br>没有提供具体位置！</div>

<!-- arrow -->
<svg width="1920" height="1045" viewBox="0 0 1920 1045">
<path d="M1124 672L1346 545" stroke="#777" stroke-width="3" fill="none" opacity=".6"/>
<path d="M1122 670L1345 541" stroke="#20f020" stroke-width="3.5" fill="none"/>
<polygon points="1358,534 1340,538 1352,550" fill="#20f020"/>
</svg>
</body></html>
